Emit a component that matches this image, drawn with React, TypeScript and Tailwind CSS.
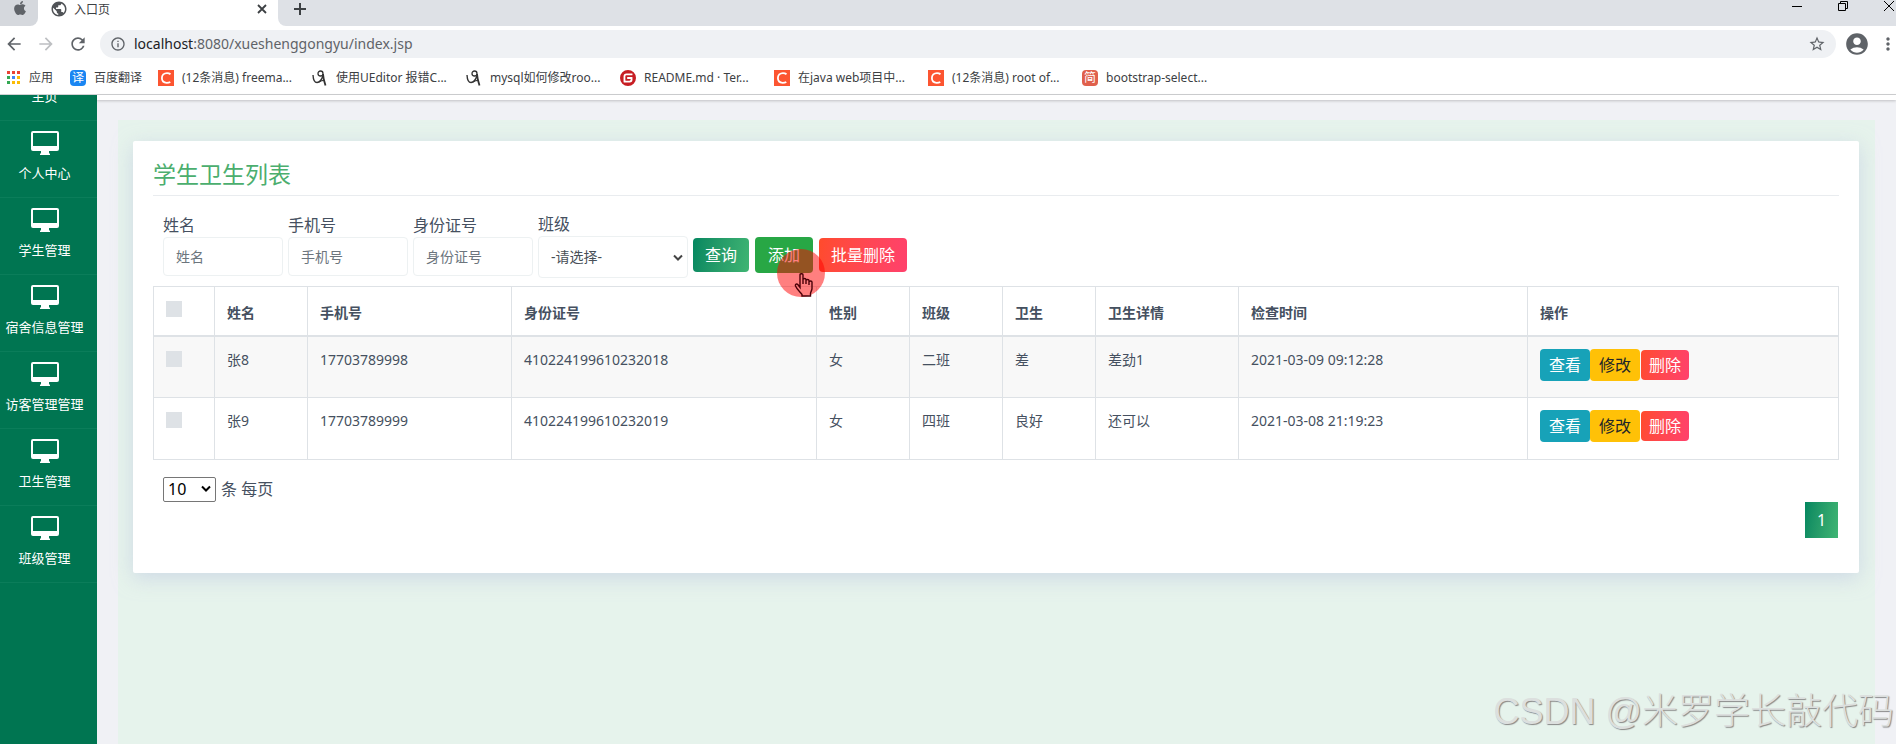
import type { ReactNode } from 'react';
import { FaApple } from 'react-icons/fa';
import { MdAccountCircle, MdArrowBack, MdArrowForward, MdInfoOutline, MdMoreVert, MdPublic, MdRefresh, MdStarBorder } from 'react-icons/md';
import { SiGitee } from 'react-icons/si';

const csdnIcon = (
  <span className="flex h-4 w-4 items-center justify-center bg-[#fc5531] text-white" aria-hidden="true">
    <svg className="h-3 w-3" viewBox="0 0 12 12" fill="none" stroke="currentColor" strokeWidth={1.8}>
      <path d="M10.5 2.2C9.6 1.5 8.4 1.1 7 1.1 4 1.1 1.9 3.2 1.9 6.1c0 2.8 1.9 4.7 4.8 4.7 1.4 0 2.6-.3 3.6-.9" />
    </svg>
  </span>
);

const scribbleIcon = (
  <svg className="h-4 w-4 text-[#333]" viewBox="0 0 16 16" fill="none" stroke="currentColor" aria-hidden="true">
    <path strokeWidth={1.4} d="M1 5c.2 4 1.500 7.500 4 7.500 2.500 0 5-3 5.800-6.500" />
    <circle strokeWidth={1.3} cx="8.500" cy="3.500" r="2.500" />
    <path strokeWidth={1.8} d="M11 4c.3 4 1.300 8 2.500 11.500" />
    <path strokeWidth={1.2} d="M7 12c2-1.200 4-1.700 6-1.500" />
  </svg>
);

const appsIcon = (
  <svg className="h-[14px] w-[14px]" viewBox="0 0 14 14" aria-hidden="true">
    <path fill="#ea4335" d="M0 0h3v3H0zM5 0h3v3H5zM10 0h3v3h-3z" />
    <path fill="#34a853" d="M0 5h3v3H0zM0 10h3v3H0z" />
    <path fill="#4285f4" d="M5 5h3v3H5z" />
    <path fill="#fbbc05" d="M10 5h3v3h-3zM5 10h3v3H5zM10 10h3v3h-3z" />
  </svg>
);

const bookmarks: { icon: ReactNode; label: string; width: string }[] = [
  { icon: appsIcon, label: '应用', width: 'w-[63px]' },
  {
    icon: <span className="flex h-4 w-4 items-center justify-center rounded-sm bg-[#1a86f2] text-xs text-white">译</span>,
    label: '百度翻译',
    width: 'w-[88px]'
  },
  { icon: csdnIcon, label: '(12条消息) freema...', width: 'w-[154px]' },
  { icon: scribbleIcon, label: '使用UEditor 报错C...', width: 'w-[154px]' },
  { icon: scribbleIcon, label: 'mysql如何修改roo...', width: 'w-[154px]' },
  { icon: <SiGitee className="h-4 w-4 text-[#c71d23]" />, label: 'README.md · Ter...', width: 'w-[154px]' },
  { icon: csdnIcon, label: '在java web项目中...', width: 'w-[154px]' },
  { icon: csdnIcon, label: '(12条消息) root of...', width: 'w-[154px]' },
  {
    icon: <span className="flex h-4 w-4 items-center justify-center rounded-sm bg-[#e0604c] text-xs text-white">简</span>,
    label: 'bootstrap-select...',
    width: 'w-[154px]'
  }
];

const menu = ['个人中心', '学生管理', '宿舍信息管理', '访客管理管理', '卫生管理', '班级管理'];

const columns = [
  { title: '姓名', width: 'w-[93px]' },
  { title: '手机号', width: 'w-[204px]' },
  { title: '身份证号', width: 'w-[305px]' },
  { title: '性别', width: 'w-[93px]' },
  { title: '班级', width: 'w-[93px]' },
  { title: '卫生', width: 'w-[93px]' },
  { title: '卫生详情', width: 'w-[143px]' },
  { title: '检查时间', width: 'w-[289px]' },
  { title: '操作', width: 'w-[311px]' }
];

const rows = [
  ['张8', '17703789998', '410224199610232018', '女', '二班', '差', '差劲1', '2021-03-09 09:12:28'],
  ['张9', '17703789999', '410224199610232019', '女', '四班', '良好', '还可以', '2021-03-08 21:19:23']
];

const filters = [
  { id: 'name', label: '姓名' },
  { id: 'phone', label: '手机号' },
  { id: 'idcard', label: '身份证号' }
];

function BrowserChrome() {
  return (
    <header className="border-b border-[#d0d1d3] bg-white text-[#3c4043]">
      <div className="flex h-[26px] bg-[#dee1e6]">
        <div className="bg-white">
          <div className="flex h-full w-[38px] items-start rounded-br-lg bg-[#d5d8dd] pl-3">
            <FaApple className="h-4 w-4 text-[#5f6368]" />
          </div>
        </div>
        <div className="flex w-[240px] items-start bg-white pl-3">
          <MdPublic className="h-[18px] w-[18px] text-[#505357]" />
          <span className="ml-1.5 flex-1 text-xs leading-5">入口页</span>
          <button type="button" aria-label="关闭标签页" className="mr-2.5 mt-1 h-3 w-3">
            <svg viewBox="0 0 12 12" fill="none" stroke="currentColor" strokeWidth={1.8}><path d="M2 1l8 8M10 1l-8 8" /></svg>
          </button>
        </div>
        <div className="flex-1 bg-white">
          <div className="flex h-full items-start justify-between rounded-bl-lg bg-[#dee1e6] pl-4">
            <button type="button" aria-label="新标签页" className="mt-[3px] h-3 w-3">
              <svg viewBox="0 0 12 12" fill="none" stroke="currentColor" strokeWidth={2}><path d="M6 0v12M0 6h12" /></svg>
            </button>
            <div className="flex gap-9 text-black">
              <button type="button" aria-label="最小化" className="h-3 w-[10px]">
                <svg viewBox="0 0 10 12" stroke="currentColor"><path d="M0 6.500h10" /></svg>
              </button>
              <button type="button" aria-label="还原" className="h-3 w-[10px]">
                <svg viewBox="0 0 10 12" fill="none" stroke="currentColor"><path d="M.5 3.500h7v7h-7zM2.500 3.500v-2h7v7h-2" /></svg>
              </button>
              <button type="button" aria-label="关闭" className="mr-0.5 h-3 w-[10px]">
                <svg viewBox="0 0 10 12" fill="none" stroke="currentColor"><path d="M0 1l10 10M10 1L0 11" /></svg>
              </button>
            </div>
          </div>
        </div>
      </div>

      <div className="flex h-9 items-center pl-1">
        <button type="button" aria-label="后退"><MdArrowBack className="h-5 w-5 text-[#5f6368]" /></button>
        <button type="button" aria-label="前进" className="ml-3"><MdArrowForward className="h-5 w-5 text-[#bdbfc2]" /></button>
        <button type="button" aria-label="刷新" className="ml-3"><MdRefresh className="h-5 w-5 text-[#5f6368]" /></button>
        <div className="ml-3 flex h-7 flex-1 items-center rounded-full bg-[#eff1f4] px-2.5">
          <MdInfoOutline className="h-4 w-4 text-[#5f6368]" />
          <span className="ml-2 flex-1 text-sm text-[#5f6368]">
            <span className="text-[#202124]">localhost</span>:8080/xueshenggongyu/index.jsp
          </span>
          <button type="button" aria-label="收藏"><MdStarBorder className="h-[18px] w-[18px] text-[#5f6368]" /></button>
        </div>
        <button type="button" aria-label="用户" className="ml-2"><MdAccountCircle className="h-[26px] w-[26px] text-[#5f6368]" /></button>
        <button type="button" aria-label="更多" className="ml-2 -mr-0.5"><MdMoreVert className="h-5 w-5 text-[#5f6368]" /></button>
      </div>

      <nav className="flex h-8 items-center overflow-hidden pl-[7px]">
        {bookmarks.map((mark, index) => (
          <a key={index} href="#" className={`flex shrink-0 items-center gap-2 whitespace-nowrap text-xs ${mark.width}`}>
            {mark.icon}
            {mark.label}
          </a>
        ))}
      </nav>
    </header>
  );
}

function Sidebar() {
  return (
    <aside className="w-[97px] shrink-0 bg-[#007551] text-[13px] text-white">
      <a href="#" className="flex h-[26px] items-end justify-center overflow-hidden border-b border-[#0b7d5a] pb-3.5 pr-2 leading-5">主页</a>
      {menu.map((item) => (
        <a key={item} href="#" className="flex h-[77px] flex-col items-center gap-2 whitespace-nowrap border-b border-[#0b7d5a] pr-2 pt-2.5 leading-5">
          <svg className="h-6 w-7" viewBox="0 0 28 24" fill="currentColor" aria-hidden="true">
            <path fillRule="evenodd" d="M2 0h24a2 2 0 012 2v16a2 2 0 01-2 2h-8v2.500h1V24H9v-1.500h1V20H2a2 2 0 01-2-2V2a2 2 0 012-2zm0 2v13h24V2z" />
          </svg>
          {item}
        </a>
      ))}
    </aside>
  );
}

function SearchForm() {
  return (
    <form className="flex items-end gap-[5px] px-2.5 text-base" onSubmit={(e) => e.preventDefault()}>
      {filters.map((filter) => (
        <div key={filter.id} className="mb-0.5 flex flex-col">
          <label htmlFor={filter.id} className="leading-6">{filter.label}</label>
          <input
            id={filter.id}
            placeholder={filter.label}
            className="h-[39px] w-[120px] rounded-sm border border-[#edf1f2] px-3 text-sm placeholder:text-[#6c757d]"
          />
        </div>
      ))}
      <div className="flex flex-col">
        <label htmlFor="class" className="leading-6">班级</label>
        <div className="relative">
          <select id="class" className="block h-[42px] w-[150px] appearance-none rounded-sm border border-[#edf1f2] bg-white px-3 text-sm text-[#495057]">
            <option>-请选择-</option>
          </select>
          <svg className="pointer-events-none absolute right-1 top-4 h-3 w-3" viewBox="0 0 12 12" fill="none" stroke="#444" strokeWidth={2} aria-hidden="true">
            <path d="M2 3.500l4 4 4-4" />
          </svg>
        </div>
      </div>
      <div className="mb-[5px] flex items-center gap-1.5">
        <button type="submit" className="h-[34px] w-14 rounded-sm bg-linear-100 from-[#028760] to-[#3fb573] text-white">查询</button>
        <div className="relative">
          <button type="button" className="block h-9 w-[58px] rounded-sm bg-[#28a745] text-white">添加</button>
          {/* click highlight and pointer */}
          <div className="pointer-events-none absolute left-[22px] top-3 z-10 h-12 w-12 rounded-full bg-[#ff0000]/50">
            <svg className="absolute left-[17px] top-6 h-6 w-[19px]" viewBox="0 0 19 24" fill="none" stroke="#4a0008" strokeWidth={1.4} aria-hidden="true">
              <path d="M6 14.500V1.800C6 .3 9 .3 9 1.800V11 6.500c0-1.300 3-1.300 3 0V11 7.500c0-1.300 3-1.300 3 0V12 9c0-1.300 3-1.300 3 0v6.500c0 2-1.500 3.500-1.500 5V23H8v-1.500c-2-2.500-5-5-6.500-8.500-.5-1.800 1.200-2.600 2.500-1.200z" />
            </svg>
          </div>
        </div>
        <button type="button" className="h-[34px] w-[88px] rounded-sm bg-linear-100 from-[#ff4b2b] to-[#ff416c] text-white">批量删除</button>
      </div>
    </form>
  );
}

function Checkbox({ label }: { label: string }) {
  return <input type="checkbox" aria-label={label} className="block h-4 w-4 appearance-none bg-[#dee2e6]" />;
}

function HygieneTable() {
  return (
    <table className="mt-2 w-full table-fixed border-collapse text-left text-sm">
      <thead>
        <tr className="h-[49px] border-b-2 border-[#dee2e6]">
          <th className="w-[61px] border border-b-2 border-[#dee2e6] px-3 pt-3.5 align-top"><Checkbox label="全选" /></th>
          {columns.map((col) => (
            <th key={col.title} className={`border border-b-2 border-[#dee2e6] px-3 pt-1 font-semibold ${col.width}`}>{col.title}</th>
          ))}
        </tr>
      </thead>
      <tbody>
        {rows.map((row) => (
          <tr key={row[0]} className="h-[62px] align-top odd:bg-[#f8f8f8]">
            <td className="border border-[#dee2e6] px-3 pt-3.5"><Checkbox label={row[0]} /></td>
            {row.map((cell, index) => (
              <td key={index} className="border border-[#dee2e6] px-3 pt-[13px]">{cell}</td>
            ))}
            <td className="border border-[#dee2e6] px-3 pt-3">
              <div className="flex items-center text-base">
                <button type="button" className="h-8 w-[50px] rounded-sm bg-[#17a2b8] text-white">查看</button>
                <button type="button" className="h-8 w-[50px] rounded-sm bg-[#ffc107] text-[#212529]">修改</button>
                <button type="button" className="ml-px h-[30px] w-12 rounded-sm bg-linear-100 from-[#ff4b2b] to-[#ff416c] text-white">删除</button>
              </div>
            </td>
          </tr>
        ))}
      </tbody>
    </table>
  );
}

export default function App() {
  return (
    <div className="relative flex min-h-screen flex-col overflow-hidden bg-[#f0f1f5] font-['Noto_Sans','Noto_Sans_CJK_SC',sans-serif] text-[#455060]">
      <BrowserChrome />
      <div className="flex flex-1">
        <Sidebar />
        <main className="flex min-w-0 flex-1 flex-col">
          <div className="h-[5px] bg-white shadow-[0_1px_3px_rgba(0,0,0,0.2)]" />
          <div className="ml-[21px] mr-[21px] mt-5 flex-1 bg-[#e6f3ec] pl-[15px] pr-4 pt-[21px]">
            <section className="rounded-xs bg-white px-5 pb-[35px] pt-4 shadow-[0_5px_20px_rgba(190,200,225,0.6)]">
              <h1 className="border-b border-[#e9ecef] pb-1 text-[23px] leading-[34px] text-[#4bae6e]">学生卫生列表</h1>
              <div className="mt-4">
                <SearchForm />
              </div>
              <HygieneTable />
              <div className="mt-4 flex h-[26px] items-center gap-[5px] px-2.5 text-base">
                <div className="relative">
                  <select id="size" className="block h-[25px] w-[53px] appearance-none rounded-xs border border-[#767676] bg-white pl-1 text-base leading-5 text-black">
                    <option>10</option>
                  </select>
                  <svg className="pointer-events-none absolute right-1 top-1.5 h-3 w-3" viewBox="0 0 12 12" fill="none" stroke="#000" strokeWidth={2} aria-hidden="true">
                    <path d="M2 3.500l4 4 4-4" />
                  </svg>
                </div>
                <label htmlFor="size">条 每页</label>
              </div>
              <div className="flex justify-end pr-px">
                <button type="button" className="h-9 w-[33px] bg-linear-100 from-[#028760] to-[#3fb573] text-base text-white">1</button>
              </div>
            </section>
          </div>
        </main>
      </div>
      <div className="pointer-events-none absolute bottom-3 right-0.5 whitespace-nowrap font-['Liberation_Sans','Noto_Sans_CJK_SC',sans-serif] text-4xl font-light text-[#dcdfde] [text-shadow:1px_1px_1px_#888]">
        CSDN @米罗学长敲代码
      </div>
    </div>
  );
}
